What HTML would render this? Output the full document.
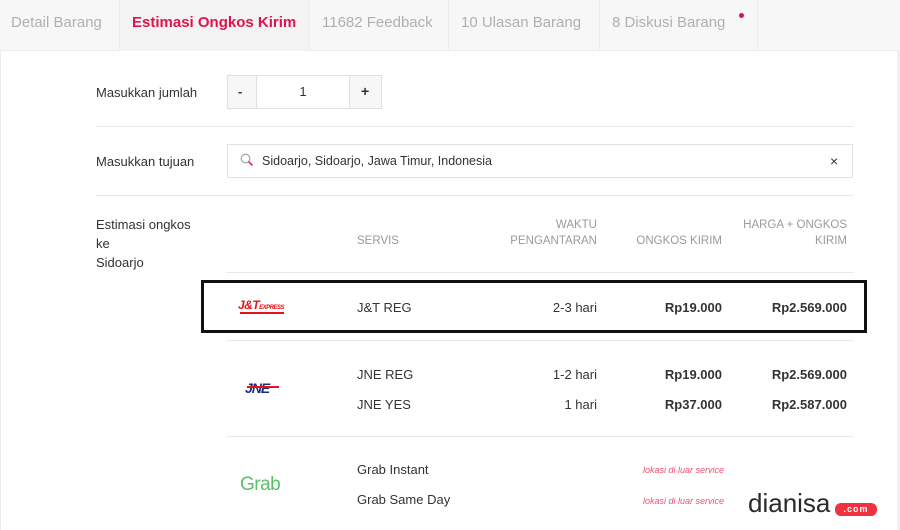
<!DOCTYPE html>
<html><head><meta charset="utf-8"><style>
*{margin:0;padding:0;box-sizing:border-box}
body{width:900px;height:530px;overflow:hidden;background:#fff;font-family:"Liberation Sans",Arial,sans-serif;position:relative;color:#333}
.tabs{position:absolute;left:0;top:0;width:900px;height:51px;background:#f7f7f7;border-bottom:1px solid #ececec}
.tab{position:absolute;top:0;height:51px;line-height:46px;font-size:15px;color:#b0b0b0;padding-left:11px;border-right:1px solid #ececec;white-space:nowrap}
.a{position:absolute;font-size:13px;color:#333}
.hr{position:absolute;height:1px;background:#e8e8e8}
.h{position:absolute;font-size:11.5px;color:#9a9a9a;text-align:right;line-height:16px}
.r{text-align:right}
.b{font-weight:bold}
.red{position:absolute;font-size:9px;color:#f0506e;font-style:italic}
</style></head><body>
<div class="tabs">
<div class="tab" style="left:0;width:120px">Detail Barang</div>
<div class="tab" style="left:120px;width:190px;color:#e0144c;font-weight:bold;background:#f3f3f3;padding-left:12px">Estimasi Ongkos Kirim</div>
<div class="tab" style="left:310px;width:139px;padding-left:12px">11682 Feedback</div>
<div class="tab" style="left:449px;width:151px;padding-left:12px">10 Ulasan Barang</div>
<div class="tab" style="left:600px;width:158px;padding-left:12px">8 Diskusi Barang</div>
<div style="position:absolute;left:739px;top:13px;width:5px;height:5px;border-radius:50%;background:#e0144c"></div>
</div>
<div style="position:absolute;left:0;top:51px;width:1px;height:479px;background:#ececec"></div>
<div style="position:absolute;left:897px;top:51px;width:3px;height:479px;background:#f0f0f0"></div>

<div class="a" style="left:96px;top:85px">Masukkan jumlah</div>
<div style="position:absolute;left:227px;top:75px;width:155px;height:34px;border:1px solid #e0e0e0;background:#f7f7f7"></div>
<div style="position:absolute;left:256px;top:75px;width:94px;height:34px;border:1px solid #e0e0e0;background:#fff;text-align:center;line-height:32px;font-size:13px">1</div>
<div class="a b" style="left:238px;top:84px">-</div>
<div class="a b" style="left:361px;top:83px;font-size:14px">+</div>
<div class="hr" style="left:96px;top:126px;width:757px"></div>

<div class="a" style="left:96px;top:154px">Masukkan tujuan</div>
<div style="position:absolute;left:227px;top:144px;width:626px;height:34px;border:1px solid #e0e0e0"></div>
<svg style="position:absolute;left:240px;top:153px" width="14" height="14" viewBox="0 0 14 14"><circle cx="5.5" cy="5.5" r="4.3" fill="none" stroke="#aaa" stroke-width="1.3"/><path d="M8.6 8.6L12.5 12.5" stroke="#e0144c" stroke-width="1.5"/></svg>
<div class="a" style="left:262px;top:154px;font-size:12.5px">Sidoarjo, Sidoarjo, Jawa Timur, Indonesia</div>
<div class="a" style="left:830px;top:153px;font-size:14px">×</div>
<div class="hr" style="left:96px;top:195px;width:757px"></div>

<div class="a" style="left:96px;top:215px;line-height:19px">Estimasi ongkos<br>ke<br>Sidoarjo</div>
<div class="h" style="left:357px;top:233px;text-align:left">SERVIS</div>
<div class="h" style="left:470px;top:217px;width:127px">WAKTU<br>PENGANTARAN</div>
<div class="h" style="left:610px;top:233px;width:112px">ONGKOS KIRIM</div>
<div class="h" style="left:720px;top:217px;width:127px">HARGA + ONGKOS<br>KIRIM</div>
<div class="hr" style="left:227px;top:272px;width:626px"></div>

<div style="position:absolute;left:201px;top:280px;width:666px;height:53px;border:3px solid #111"></div>
<div style="position:absolute;left:238px;top:298px;color:#e3141b;font-weight:bold;font-style:italic;font-size:12px;letter-spacing:-0.5px">J&amp;T<span style="font-size:6px">EXPRESS</span></div>
<div style="position:absolute;left:240px;top:312px;width:44px;height:2px;background:#e3141b"></div>
<div class="a" style="left:357px;top:300px">J&amp;T REG</div>
<div class="a r" style="left:500px;top:300px;width:97px">2-3 hari</div>
<div class="a r b" style="left:620px;top:300px;width:102px">Rp19.000</div>
<div class="a r b" style="left:730px;top:300px;width:117px">Rp2.569.000</div>
<div class="hr" style="left:227px;top:340px;width:626px"></div>

<div style="position:absolute;left:245px;top:380px;color:#1c2f7a;font-weight:bold;font-style:italic;font-size:14px;letter-spacing:-1px">JNE</div>
<div style="position:absolute;left:247px;top:386px;width:32px;height:2px;background:#e3141b"></div>
<div class="a" style="left:357px;top:367px">JNE REG</div>
<div class="a r" style="left:500px;top:367px;width:97px">1-2 hari</div>
<div class="a r b" style="left:620px;top:367px;width:102px">Rp19.000</div>
<div class="a r b" style="left:730px;top:367px;width:117px">Rp2.569.000</div>
<div class="a" style="left:357px;top:397px">JNE YES</div>
<div class="a r" style="left:500px;top:397px;width:97px">1 hari</div>
<div class="a r b" style="left:620px;top:397px;width:102px">Rp37.000</div>
<div class="a r b" style="left:730px;top:397px;width:117px">Rp2.587.000</div>
<div class="hr" style="left:227px;top:436px;width:626px"></div>

<div style="position:absolute;left:240px;top:474px;color:#5cbf6a;font-size:19px;letter-spacing:-0.5px">Grab</div>
<div class="a" style="left:357px;top:462px">Grab Instant</div>
<div class="a" style="left:357px;top:492px">Grab Same Day</div>
<div class="red" style="left:643px;top:465px">lokasi di luar service</div>
<div class="red" style="left:643px;top:496px">lokasi di luar service</div>

<div style="position:absolute;left:748px;top:488px;font-size:26px;color:#2a2a2a;letter-spacing:0px;line-height:30px">dianisa</div>
<div style="position:absolute;left:835px;top:503px;width:42px;height:13px;border-radius:6px;background:#f0313f;color:#fff;font-size:9px;line-height:13px;text-align:center;font-weight:bold;letter-spacing:1px">.com</div>
</body></html>
